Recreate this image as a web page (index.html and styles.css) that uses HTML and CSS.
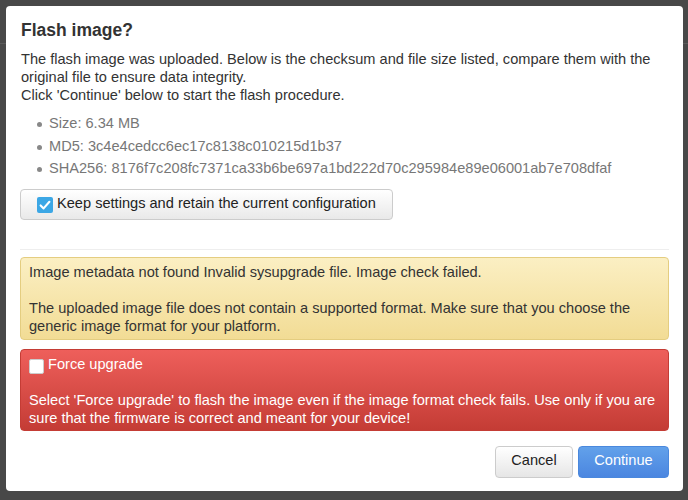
FILE: index.html
```html
<!DOCTYPE html>
<html>
<head>
<meta charset="utf-8">
<link rel="stylesheet" href="styles.css">
</head>
<body>
<div class="backdrop">
  <div class="bg-bar"></div>
</div>
<div class="modal">
  <h4 class="title">Flash image?</h4>
  <p class="intro">The flash image was uploaded. Below is the checksum and file size listed, compare them with the original file to ensure data integrity.<br>Click 'Continue' below to start the flash procedure.</p>
  <ul class="facts">
    <li>Size: 6.34 MB</li>
    <li>MD5: 3c4e4cedcc6ec17c8138c010215d1b37</li>
    <li>SHA256: 8176f7c208fc7371ca33b6be697a1bd222d70c295984e89e06001ab7e708dfaf</li>
  </ul>
  <label class="keep">
    <span class="cb cb-on"><svg viewBox="0 0 16 16" width="16" height="16"><path d="M3.6 8.4 L6.6 11.4 L12.4 4.8" fill="none" stroke="#fff" stroke-width="2.1" stroke-linecap="round" stroke-linejoin="round"/></svg></span>
    <span>Keep settings and retain the current configuration</span>
  </label>
  <hr class="sep">
  <div class="alert warn">
    <div>Image metadata not found Invalid sysupgrade file. Image check failed.</div>
    <div class="gap"></div>
    <div>The uploaded image file does not contain a supported format. Make sure that you choose the generic image format for your platform.</div>
  </div>
  <div class="alert danger">
    <label class="force"><span class="cb cb-off"></span><span>Force upgrade</span></label>
    <div class="gap"></div>
    <div>Select 'Force upgrade' to flash the image even if the image format check fails. Use only if you are sure that the firmware is correct and meant for your device!</div>
  </div>
  <div class="actions">
    <button class="btn btn-cancel">Cancel</button>
    <button class="btn btn-primary">Continue</button>
  </div>
</div>
</body>
</html>
```
FILE: styles.css
```css
html, body {
  margin: 0;
  padding: 0;
}
body {
  width: 688px;
  height: 500px;
  background: #484848;
  font-family: "Liberation Sans", Arial, sans-serif;
  font-size: 14.6px;
  line-height: 18px;
  color: #333;
  overflow: hidden;
  position: relative;
}
.backdrop {
  position: absolute;
  inset: 0;
}
.bg-bar {
  position: absolute;
  left: 0;
  right: 0;
  top: 43px;
  height: 1px;
  background: #5a5a5a;
}

.modal {
  position: absolute;
  left: 6px;
  top: 6px;
  width: 649px;
  height: 457px;
  background: #fff;
  border-radius: 4px;
  padding: 14px;
}
.title {
  margin: 0;
  font-size: 17.5px;
  line-height: 20px;
  font-weight: bold;
  color: #333;
  padding-left: 1px;
}
.intro {
  margin: 10px 0 0 1px;
}
.facts {
  margin: 8px 0 0 0;
  padding: 0 0 0 29px;
  color: #777;
  list-style: none;
}
.facts li {
  line-height: 22.5px;
  position: relative;
}
.facts li::before {
  content: "";
  position: absolute;
  left: -12px;
  top: 10px;
  width: 5px;
  height: 5px;
  border-radius: 50%;
  background: #888;
}
.keep {
  margin-top: 9px;
  display: flex;
  align-items: center;
  width: 373px;
  height: 31px;
  box-sizing: border-box;
  padding: 0 0 2px 16px;
  border: 1px solid #ccc;
  border-radius: 4px;
  background: linear-gradient(#ffffff, #e9e9e9);
  color: #222;
  gap: 4px;
}
.cb {
  display: inline-block;
  width: 16px;
  height: 16px;
  box-sizing: border-box;
  border-radius: 2px;
  flex: none;
}
.cb-on {
  background: #3ca7e5;
  margin-top: 3px;
}
.cb-on svg { display: block; }
.cb-off {
  width: 15px;
  height: 15px;
  background: #fff;
  border: 1px solid #ccc;
}
.sep {
  border: 0;
  border-top: 1px solid #eee;
  margin: 29px 0 0 0;
  height: 0;
}
.alert {
  border-radius: 4px;
  padding: 5px 9px 5px 9px;
  box-sizing: border-box;
}
.gap { height: 18px; }
.warn {
  margin-top: 7px;
  height: 83px;
  background: linear-gradient(#fbefc3, #f2dc95);
  border: 1px solid #e4cd80;
  color: #333;
  padding-top: 5px;
  padding-left: 8px;
}
.danger {
  margin-top: 9px;
  height: 82px;
  background: linear-gradient(#ee5f5b, #c43c35);
  border: 1px solid #c43c35;
  color: #fff;
  padding-top: 5px;
  padding-left: 8px;
}
.force {
  display: flex;
  align-items: center;
  gap: 4px;
  height: 18px;
}
.force .cb-off { margin-top: 5px; }
.actions {
  margin-top: 15px;
  display: flex;
  justify-content: flex-end;
  gap: 5px;
}
.btn {
  font-family: "Liberation Sans", Arial, sans-serif;
  font-size: 14.6px;
  height: 32px;
  border-radius: 4px;
  padding: 0 0 3px 0;
  cursor: pointer;
}
.btn-cancel {
  width: 78px;
  border: 1px solid #ccc;
  background: linear-gradient(#ffffff, #e6e6e6);
  color: #222;
}
.btn-primary {
  width: 91px;
  border: 1px solid #4a88dd;
  background: linear-gradient(#62a1ea, #4b86e0);
  color: #fff;
}
```
